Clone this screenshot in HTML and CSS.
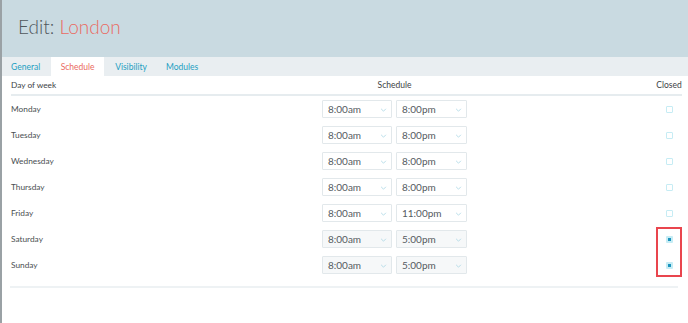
FILE: index.html
```html
<!DOCTYPE html>
<html>
<head>
<meta charset="utf-8">
<link rel="stylesheet" href="styles.css">
</head>
<body>
<div class="page">
  <header class="hero">
    <h1 class="title">Edit: <span class="name">London</span></h1>
  </header>
  <nav class="tabs">
    <span class="tab">General</span>
    <span class="tab active">Schedule</span>
    <span class="tab">Visibility</span>
    <span class="tab">Modules</span>
  </nav>
  <div class="table">
    <div class="row head">
      <div class="day">Day of week</div>
      <div class="sched">Schedule</div>
      <div class="closed">Closed</div>
    </div>
    <div class="row"><div class="day">Monday</div><div class="sched"><div class="sel">8:00am<svg class="chev" viewBox="0 0 8 5"><path d="M1 1l3 3 3-3"/></svg></div><div class="sel">8:00pm<svg class="chev" viewBox="0 0 8 5"><path d="M1 1l3 3 3-3"/></svg></div></div><div class="closed"><span class="cb"></span></div></div>
    <div class="row"><div class="day">Tuesday</div><div class="sched"><div class="sel">8:00am<svg class="chev" viewBox="0 0 8 5"><path d="M1 1l3 3 3-3"/></svg></div><div class="sel">8:00pm<svg class="chev" viewBox="0 0 8 5"><path d="M1 1l3 3 3-3"/></svg></div></div><div class="closed"><span class="cb"></span></div></div>
    <div class="row"><div class="day">Wednesday</div><div class="sched"><div class="sel">8:00am<svg class="chev" viewBox="0 0 8 5"><path d="M1 1l3 3 3-3"/></svg></div><div class="sel">8:00pm<svg class="chev" viewBox="0 0 8 5"><path d="M1 1l3 3 3-3"/></svg></div></div><div class="closed"><span class="cb"></span></div></div>
    <div class="row"><div class="day">Thursday</div><div class="sched"><div class="sel">8:00am<svg class="chev" viewBox="0 0 8 5"><path d="M1 1l3 3 3-3"/></svg></div><div class="sel">8:00pm<svg class="chev" viewBox="0 0 8 5"><path d="M1 1l3 3 3-3"/></svg></div></div><div class="closed"><span class="cb"></span></div></div>
    <div class="row"><div class="day">Friday</div><div class="sched"><div class="sel">8:00am<svg class="chev" viewBox="0 0 8 5"><path d="M1 1l3 3 3-3"/></svg></div><div class="sel">11:00pm<svg class="chev" viewBox="0 0 8 5"><path d="M1 1l3 3 3-3"/></svg></div></div><div class="closed"><span class="cb"></span></div></div>
    <div class="row"><div class="day">Saturday</div><div class="sched"><div class="sel dis">8:00am<svg class="chev" viewBox="0 0 8 5"><path d="M1 1l3 3 3-3"/></svg></div><div class="sel dis">5:00pm<svg class="chev" viewBox="0 0 8 5"><path d="M1 1l3 3 3-3"/></svg></div></div><div class="closed"><span class="cb on"></span></div></div>
    <div class="row"><div class="day">Sunday</div><div class="sched"><div class="sel dis">8:00am<svg class="chev" viewBox="0 0 8 5"><path d="M1 1l3 3 3-3"/></svg></div><div class="sel dis">5:00pm<svg class="chev" viewBox="0 0 8 5"><path d="M1 1l3 3 3-3"/></svg></div></div><div class="closed"><span class="cb on"></span></div></div>
    <div class="highlight"></div>
  </div>
  <div class="rule"></div>
</div>
</body>
</html>
```

FILE: styles.css
```css
* { box-sizing: border-box; }
html, body { margin: 0; padding: 0; }
body {
  font-family: Lato, "Open Sans", sans-serif;
  background: #fff;
  color: #4a4f52;
  width: 688px;
  height: 323px;
  overflow: hidden;
}
.page {
  border-left: 2px solid #9aa1a5;
  height: 323px;
}
.hero {
  background: #c9dae1;
  height: 57px;
  display: flex;
  align-items: center;
  padding-left: 16px;
}
.title {
  margin: 0 0 4px 0;
  font-weight: 300;
  font-size: 19px;
  color: #50575c;
}
.name { color: #ea6a62; }
.tabs {
  background: #e9eef1;
  height: 19px;
  display: flex;
  align-items: stretch;
}
.tab {
  font-size: 8.5px;
  color: #1e9fc2;
  padding: 1px 10px 0 9px;
  display: flex;
  align-items: center;
}
.tab.active {
  background: #fff;
  color: #ea6a62;
  margin: 0 0 0 1px;
  padding: 1px 10px 0 10px;
  width: 53px;
  justify-content: center;
}
.tabs .tab:nth-child(3) { padding-left: 11px; padding-right: 19px; }
.tabs .tab:nth-child(4) { padding-left: 0; }
.table {
  position: relative;
  padding: 0 6px 0 9px;
}
.row {
  display: grid;
  grid-template-columns: 311px 145px 1fr;
  height: 26px;
  align-items: center;
}
.row.head {
  height: 20px;
  border-bottom: 2px solid #e6ecef;
  color: #3d4245;
}
.day { font-size: 8.3px; }
.head .sched, .head .closed { font-size: 8.5px; }
.sched { display: flex; gap: 4px; }
.head .sched { display: block; text-align: center; }
.sel {
  position: relative;
  width: 70px;
  height: 18px;
  border: 1px solid #e2e8eb;
  border-radius: 1px;
  font-size: 10px;
  color: #555b5f;
  padding: 0 0 0 5px;
  display: flex;
  align-items: center;
  background: #fff;
}
.sel + .sel { width: 71px; }
.sel.dis { background: #f6f8f9; }
.chev {
  position: absolute;
  right: 4px;
  top: 7px;
  width: 7px;
  height: 4px;
  fill: none;
  stroke: #a8d6e4;
  stroke-width: 1;
}
.closed {
  justify-self: end;
  width: 26px;
  display: flex;
  justify-content: center;
}
.cb {
  width: 7px;
  height: 7px;
  border: 1px solid #c6ecf4;
  border-radius: 1px;
  background: #fff;
  margin-left: 1px;
}
.cb.on {
  background: #1b94be;
  border: 2px solid #c6ecf4;
}
.highlight {
  position: absolute;
  left: 654px;
  top: 151px;
  width: 26px;
  height: 50px;
  border: 2px solid #e9454e;
  pointer-events: none;
}
.rule {
  margin: 8px 10px 0 8px;
  height: 2px;
  background: #eef2f4;
}
```
